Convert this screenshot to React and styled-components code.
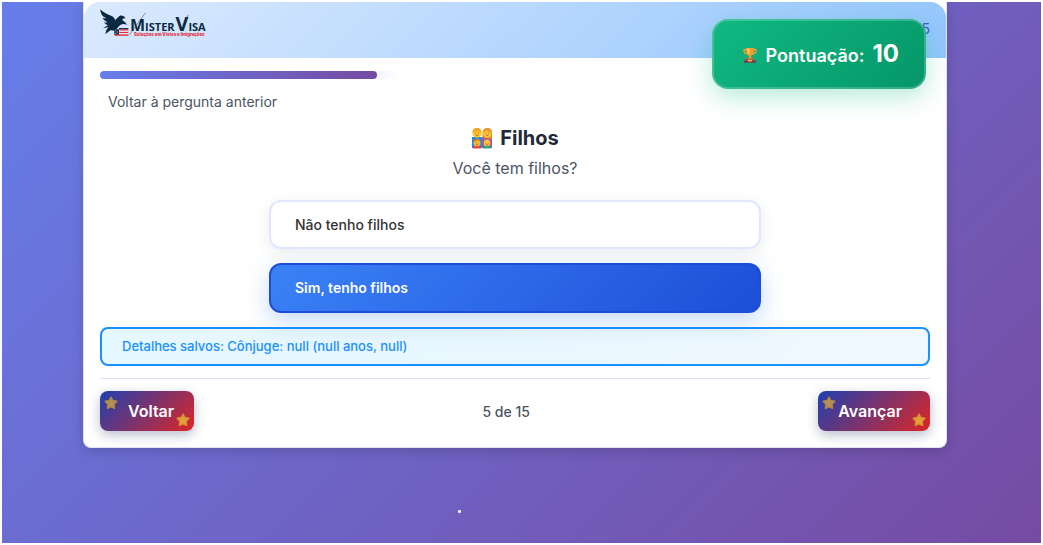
import React, { useState } from "react";
import styled, { createGlobalStyle, css } from "styled-components";

const GlobalStyle = createGlobalStyle`
  *, *::before, *::after { box-sizing: border-box; }
  body {
    margin: 0;
    padding: 2px;
    background: #ffffff;
    font-family: Inter, "Liberation Sans", sans-serif;
    color: #1f2937;
  }
  button { font-family: inherit; cursor: pointer; }
`;

const Page = styled.div`
  min-height: calc(100vh - 4px);
  padding: 0 94px 0 81px;
  overflow: hidden;
  background: linear-gradient(135deg, #667eea 0%, #764ba2 100%);
`;

const Card = styled.main`
  position: relative;
  max-width: 1000px;
  margin: 0 auto;
  background: #ffffff;
  border: 1px solid #e2e2f0;
  border-top: 0;
  border-radius: 0 0 8px 8px;
  box-shadow: 0 4px 12px rgba(0, 0, 0, 0.15);
`;

const Header = styled.header`
  display: flex;
  justify-content: space-between;
  align-items: flex-start;
  height: 56px;
  padding: 6px 16px;
  border-radius: 16px 16px 0 0;
  background: linear-gradient(135deg, #dbeafe 0%, #93c5fd 100%);
`;

const Logo = styled.svg`
  display: block;
  width: 108px;
  height: 34px;
`;

const HeaderStep = styled.span`
  padding-top: 11px;
  font-size: 14px;
  line-height: 20px;
  color: #3b5bc8;
`;

const Score = styled.aside`
  position: absolute;
  top: 17px;
  right: 20px;
  display: flex;
  align-items: center;
  gap: 8px;
  height: 70px;
  padding: 2px 25px 0 28px;
  border: 2px solid rgba(255, 255, 255, 0.2);
  border-radius: 16px;
  background: linear-gradient(135deg, #10b981 0%, #059669 100%) border-box;
  box-shadow: 0 8px 25px rgba(16, 185, 129, 0.3);
  color: #ffffff;
  font-size: 18px;
  line-height: 28px;
  font-weight: 600;
  white-space: nowrap;
`;

const ScoreLabel = styled.span`
  padding-top: 2px;
`;

const ScoreValue = styled.strong`
  font-size: 24px;
  font-weight: 700;
  padding-bottom: 2px;
`;

const Body = styled.div`
  padding: 13px 16px 16px;
`;

const Track = styled.div`
  height: 8px;
  border-radius: 4px;
  background: linear-gradient(90deg, #f3f4ff 33%, #ffffff 36%);
`;

const Fill = styled.div`
  height: 100%;
  border-radius: 4px;
  background: linear-gradient(90deg, #667eea 0%, #764ba2 100%);
`;

const BackLink = styled.button`
  display: block;
  margin-top: 13px;
  padding: 0 8px;
  border: 0;
  background: none;
  color: #4b5563;
  font-size: 14px;
  line-height: 20px;
`;

const Title = styled.h1`
  display: flex;
  justify-content: center;
  align-items: center;
  gap: 7px;
  margin: 12px 0 0;
  font-size: 20px;
  line-height: 28px;
  font-weight: 700;
`;

const Question = styled.p`
  margin: 4px 0 0;
  text-align: center;
  font-size: 16px;
  line-height: 24px;
  color: #4b5563;
`;

const Options = styled.div`
  display: grid;
  gap: 14px;
  max-width: 492px;
  margin: 20px auto 0;
`;

const Option = styled.button`
  height: 49px;
  padding: 0 24px;
  border: 2px solid #e0e7ff;
  border-radius: 12px;
  background: #ffffff;
  box-shadow: 0 4px 16px rgba(0, 0, 0, 0.08);
  color: #333333;
  font-size: 14px;
  font-weight: 500;
  text-align: left;

  ${({ $selected }) =>
    $selected &&
    css`
      height: 50px;
      padding-bottom: 2px;
      border-color: #1d4ed8;
      background: linear-gradient(135deg, #3b82f6 0%, #1d4ed8 100%);
      box-shadow: 0 8px 25px rgba(59, 130, 246, 0.3);
      color: #ffffff;
      font-weight: 600;
    `}
`;

const Notice = styled.p`
  margin: 14px 0 0;
  padding: 7px 20px 8px;
  border: 2px solid #1890ff;
  border-radius: 8px;
  background: linear-gradient(135deg, rgba(222, 245, 255, 0.8) 0%, #f0f8ff 100%);
  color: #1890ff;
  font-size: 13px;
  line-height: 20px;
  font-weight: 500;
`;

const Footer = styled.footer`
  display: flex;
  justify-content: space-between;
  align-items: center;
  margin-top: 12px;
  padding-top: 12px;
  border-top: 1px solid #e0e0fa;
`;

const Counter = styled.span`
  font-size: 14px;
  font-weight: 500;
  color: #4b5563;
`;

const NavButton = styled.button`
  position: relative;
  height: 40px;
  padding: ${({ $back }) => ($back ? "0 20px 0 28px" : "0 28px 0 20px")};
  border: 0;
  border-radius: 8px;
  background: linear-gradient(135deg, #1e40af 0%, #dc2626 100%);
  box-shadow: 0 4px 12px rgba(30, 41, 90, 0.3);
  color: #ffffff;
  font-size: 16px;
  font-weight: 600;
`;

const StarSvg = styled.svg`
  position: absolute;
  width: 14px;
  height: 14px;
  ${({ $end }) =>
    $end
      ? css`right: 4px; bottom: 4px; opacity: 0.85;`
      : css`left: 4px; top: 5px; opacity: 0.7;`}
`;

const Emoji = styled.svg`
  display: block;
  flex: none;
  width: ${({ $size }) => $size}px;
  height: ${({ $size }) => $size}px;
`;

const Spark = styled.i`
  display: block;
  width: 3px;
  height: 3px;
  margin: 62px auto 0 375px;
  border-radius: 1px;
  background: #f3f0ff;
`;

function Star({ end }) {
  return (
    <StarSvg viewBox="0 0 14 14" $end={end} aria-hidden="true">
      <path
        d="M7 1.300l1.800 3.300 3.900.8-2.700 2.900.5 4L7 10.700l-3.500 1.600.5-4L1.300 5.400l3.900-.8z"
        fill="#e9b63a"
        stroke="#e0a632"
        strokeWidth="1.600"
        strokeLinejoin="round"
      />
    </StarSvg>
  );
}

function Trophy() {
  return (
    <Emoji $size={16} viewBox="0 0 18 18" aria-hidden="true">
      <path d="M5 3H2.300c-.2 3 1.200 4.800 4.200 5.200M13 3h2.700c.2 3-1.200 4.800-4.200 5.200" fill="none" stroke="#f5a33b" strokeWidth="1.500" />
      <path d="M4.200 1h9.600c0 4.700-1 7.700-3.600 9v3H7.800v-3C5.200 8.700 4.200 5.700 4.200 1z" fill="#f59b2e" />
      <path d="M5.500 2h3v6.500C6.600 7.300 5.700 5 5.500 2z" fill="#ffd35c" />
      <path d="M6 12h6l1 2H5z" fill="#d97724" />
      <path d="M3.500 13.500h11v2h-11z" fill="#9b5363" />
      <path d="M2.200 15.200h13.600v2.600H2.200z" fill="#75404f" />
      <path d="M6.800 14.300h4.400v1.900H6.800z" fill="#f4b545" />
    </Emoji>
  );
}

function Family() {
  return (
    <Emoji $size={22} viewBox="0 0 22 22" aria-hidden="true">
      <path d="M1 21V10h10v11z" fill="#238bd7" />
      <path d="M11 21V10h10v11z" fill="#a152c6" />
      <path d="M11.500 11V5.500Q12 1 16.500 1T21 6v6z" fill="#e88a20" />
      <circle cx="6" cy="6" r="4.700" fill="#ffc52f" />
      <path d="M1.500 5.500Q1.500 1 6 1t4.500 4.500Q8.500 4 6 4T1.500 5.500z" fill="#f4a423" />
      <circle cx="16.200" cy="6.400" r="4.100" fill="#ffc83a" />
      <path d="M12 5q1-3.500 4.200-3.500T20.500 5.500Q17 5.300 15.500 3.600 14.500 5 12 5z" fill="#ed9b27" />
      <path d="M4.500 5.500v.8M7.500 5.500v.8M14.800 5.800v.8M17.700 5.800v.8" stroke="#79502c" strokeWidth=".8" />
      <path d="M4.500 8q1.500 1 3 0M14.800 8q1.400 1 2.800 0" fill="none" stroke="#a94e2c" strokeWidth=".7" />
      <path d="M2 21.500v-2q4-3 8 0v2z" fill="#e6483f" />
      <path d="M12 21.500v-2q4-3 8 0v2z" fill="#29a783" />
      <path d="M12.300 18.500v-3q.7-3.500 3.900-3.500t3.600 3.500v3z" fill="#d2702c" />
      <circle cx="6" cy="15.700" r="3.500" fill="#ffbe32" />
      <circle cx="16" cy="16" r="3.200" fill="#ffc63e" />
      <path d="M2.500 15q.5-3.300 3.500-3.300T9.500 15Q7.500 13 6 13.700T2.500 15z" fill="#d97a29" />
      <path d="M4.800 15.500v.8M7.300 15.500v.8M14.800 15.700v.8M17.300 15.700v.8" stroke="#79502c" strokeWidth=".8" />
      <path d="M5 17.700h2M15 17.900h2" stroke="#b34132" strokeWidth=".8" />
    </Emoji>
  );
}

function MisterVisaLogo() {
  return (
    <Logo viewBox="0 0 324 102" role="img" aria-label="Mister Visa">
      <path
        d="M1 4c9 11 22 15 34 20 6 3 9 7 11 13 2-4 5-7 9-9 2-4 6-6 11-5 5 0 8 3 11 8-5-1-9 1-10 5 4 4 12 8 14 15-8-4-14-3-20 0-6 4-10 12-16 17l-14-1-15 12 3-13 6-8-16 2 15-8c-6-2-9-5-12-9 4 1 7 1 10-1-7-3-12-7-14-13 4 2 8 2 11 1C9 28 2 20 1 4z"
        fill="#0b2a42"
      />
      <path d="M43 64h14v17H43zM57 60h28v4H57z" fill="#17324f" />
      <path d="M58 66h27M58 73h27M44 81h41" stroke="#dd2b35" strokeWidth="4" />
      <path d="M58 69.500h27M58 77h27" stroke="#f4eef5" strokeWidth="3" />
      <path d="M46 68h3M51 72h3M46 76h3" stroke="#ffffff" strokeWidth="2" />
      <path d="M136 15L87 82" stroke="#526777" strokeWidth="2" />
      <path d="M264 20l-15 42" stroke="#cf3244" strokeWidth="2" />
      <text x="90" y="70" fill="#0b2a42" fontFamily="'Open Sans', sans-serif" fontWeight="700" fontSize="33">
        <tspan fontSize="48">M</tspan>
        <tspan>ISTER</tspan>
        <tspan dx="3" fontSize="59">V</tspan>
        <tspan>ISA</tspan>
      </text>
      <text x="102" y="85" fontSize="13" fontFamily="Inter, sans-serif" fontWeight="800" fill="#e42c36">
        Soluções em Vistos e Imigrações
      </text>
    </Logo>
  );
}

const answers = ["Não tenho filhos", "Sim, tenho filhos"];

export default function App() {
  const [selected, setSelected] = useState(1);
  const step = 5;
  const total = 15;

  return (
    <>
      <GlobalStyle />
      <Page>
        <Card>
          <Header>
            <MisterVisaLogo />
            <HeaderStep>{step} de {total}</HeaderStep>
          </Header>
          <Score>
            <Trophy />
            <ScoreLabel>Pontuação:</ScoreLabel>
            <ScoreValue>10</ScoreValue>
          </Score>
          <Body>
            <Track>
              <Fill style={{ width: `${(step / total) * 100}%` }} />
            </Track>
            <BackLink type="button">Voltar à pergunta anterior</BackLink>
            <Title>
              <Family />
              Filhos
            </Title>
            <Question>Você tem filhos?</Question>
            <Options>
              {answers.map((label, index) => (
                <Option
                  key={label}
                  type="button"
                  $selected={selected === index}
                  aria-pressed={selected === index}
                  onClick={() => setSelected(index)}
                >
                  {label}
                </Option>
              ))}
            </Options>
            <Notice>Detalhes salvos: Cônjuge: null (null anos, null)</Notice>
            <Footer>
              <NavButton type="button" $back>
                <Star />
                Voltar
                <Star end />
              </NavButton>
              <Counter>{step} de {total}</Counter>
              <NavButton type="button">
                <Star />
                Avançar
                <Star end />
              </NavButton>
            </Footer>
          </Body>
        </Card>
        <Spark />
      </Page>
    </>
  );
}
